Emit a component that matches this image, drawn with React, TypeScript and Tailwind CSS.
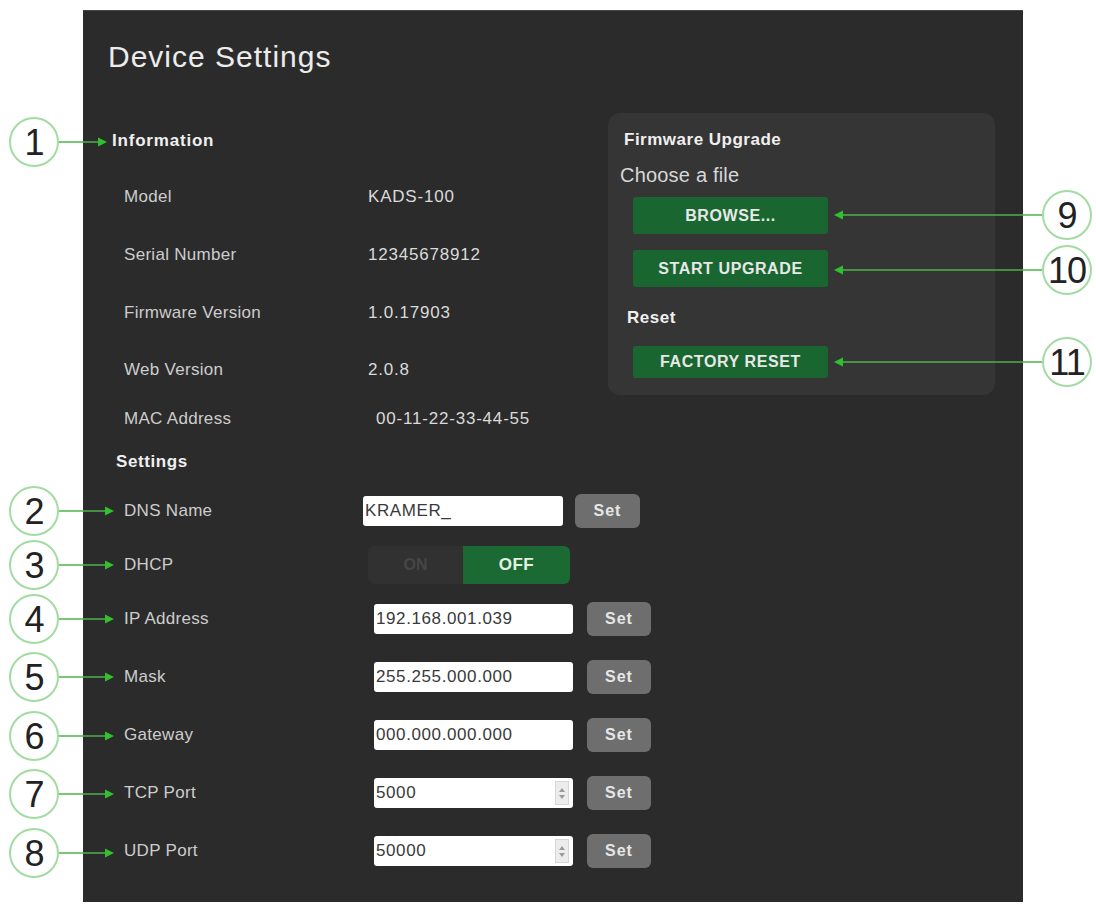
import React from 'react';

// callout annotations drawn over the screenshot (circle centre y, arrow tip x)
const LEFT_CALLOUTS = [
  { n: '1', y: 142, tip: 107 },
  { n: '2', y: 511, tip: 114 },
  { n: '3', y: 565, tip: 114 },
  { n: '4', y: 619, tip: 114 },
  { n: '5', y: 677, tip: 114 },
  { n: '6', y: 736, tip: 114 },
  { n: '7', y: 794, tip: 114 },
  { n: '8', y: 853, tip: 114 },
];

const RIGHT_CALLOUTS = [
  { n: '9', y: 215, tip: 834 },
  { n: '10', y: 270, tip: 834 },
  { n: '11', y: 362, tip: 834 },
];

const INFO = [
  { label: 'Model', value: 'KADS-100', mt: 'mt-[26px]', vcls: '' },
  { label: 'Serial Number', value: '12345678912', mt: 'mt-[28px]', vcls: '' },
  { label: 'Firmware Version', value: '1.0.17903', mt: 'mt-[28px]', vcls: '' },
  { label: 'Web Version', value: '2.0.8', mt: 'mt-[27px]', vcls: '' },
  { label: 'MAC Address', value: '00-11-22-33-44-55', mt: 'mt-[19px]', vcls: 'ml-[8px]' },
];

const NET = [
  { label: 'IP Address', value: '192.168.001.039', mt: 'mt-[24px]', spin: false },
  { label: 'Mask', value: '255.255.000.000', mt: 'mt-[28px]', spin: false },
  { label: 'Gateway', value: '000.000.000.000', mt: 'mt-[28px]', spin: false },
  { label: 'TCP Port', value: '5000', mt: 'mt-[28px]', spin: true },
  { label: 'UDP Port', value: '50000', mt: 'mt-[28px]', spin: true },
];

function Callouts() {
  return (
    <>
      <svg className="absolute inset-0 pointer-events-none" width={1096} height={910}>
        {LEFT_CALLOUTS.map((c) => (
          <g key={c.n}>
            <line x1={59} y1={c.y} x2={c.tip - 6} y2={c.y} stroke="#4cb34c" strokeWidth={1.5} />
            <polygon points={`${c.tip},${c.y} ${c.tip - 9},${c.y - 4.5} ${c.tip - 9},${c.y + 4.5}`} fill="#2fc22f" />
            <circle cx={34} cy={c.y} r={24} fill="#ffffff" stroke="#a2dca2" strokeWidth={2} />
          </g>
        ))}
        {RIGHT_CALLOUTS.map((c) => (
          <g key={c.n}>
            <line x1={c.tip + 6} y1={c.y} x2={1043} y2={c.y} stroke="#4cb34c" strokeWidth={1.5} />
            <polygon points={`${c.tip},${c.y} ${c.tip + 9},${c.y - 4.5} ${c.tip + 9},${c.y + 4.5}`} fill="#2fc22f" />
            <circle cx={1067} cy={c.y} r={24} fill="#ffffff" stroke="#a2dca2" strokeWidth={2} />
          </g>
        ))}
      </svg>
      {[...LEFT_CALLOUTS.map((c) => ({ ...c, x: 34 })), ...RIGHT_CALLOUTS.map((c) => ({ ...c, x: 1067 }))].map((c) => (
        <div
          key={c.n}
          className="absolute w-[50px] h-[50px] flex items-center justify-center text-[36px] leading-none tracking-[-1px] text-[#222222]"
          style={{ left: c.x - 25, top: c.y - 24 }}
        >
          {c.n}
        </div>
      ))}
    </>
  );
}

function SetButton({ w }: { w: string }) {
  return (
    <button className={`${w} h-[34px] shrink-0 rounded-[6px] bg-[#6e6e6e] text-[#e6e6e6] text-[16px] font-bold tracking-[1px]`}>
      Set
    </button>
  );
}

function Spinner() {
  return (
    <div className="absolute right-[4px] top-[3px] bottom-[3px] w-[14px] bg-[#ececec] border border-[#d6d6d6] flex flex-col items-center justify-center gap-[3px]">
      <div className="w-0 h-0 border-l-[3px] border-r-[3px] border-b-[4px] border-l-transparent border-r-transparent border-b-[#9a9a9a]" />
      <div className="w-0 h-0 border-l-[3px] border-r-[3px] border-t-[4px] border-l-transparent border-r-transparent border-t-[#9a9a9a]" />
    </div>
  );
}

function FirmwarePanel() {
  const btn =
    'ml-[25px] w-[195px] rounded-[3px] bg-[#1a6630] text-[#e8e8e8] text-[16px] font-bold tracking-[0.6px] flex items-center justify-center';
  return (
    <div className="mt-[39px] w-[387px] h-[282px] shrink-0 rounded-[12px] bg-[#353535] flex flex-col">
      <div className="ml-[16px] mt-[16px] h-[22px] leading-[22px] text-[17px] font-bold tracking-[0.5px] text-[#efefef]">
        Firmware Upgrade
      </div>
      <div className="ml-[12px] mt-[12px] h-[24px] leading-[24px] text-[20px] tracking-[0.2px] text-[#d8d8d8]">
        Choose a file
      </div>
      <button className={`${btn} mt-[10px] h-[37px]`}>BROWSE...</button>
      <button className={`${btn} mt-[16px] h-[37px]`}>START UPGRADE</button>
      <div className="ml-[19px] mt-[20px] h-[22px] leading-[22px] text-[17px] font-bold tracking-[0.5px] text-[#efefef]">
        Reset
      </div>
      <button className={`${btn} mt-[17px] h-[32px]`}>FACTORY RESET</button>
    </div>
  );
}

export default function App() {
  const label = 'shrink-0 text-[17px] tracking-[0.3px] text-[#cdcdcd]';
  const input =
    'h-[30px] shrink-0 rounded-[3px] bg-white pl-[2px] text-[17px] tracking-[0.6px] text-[#3a3a3a] outline-none';
  return (
    <div className="relative w-[1096px] h-[910px] bg-white overflow-hidden font-['Liberation_Sans',Arial,sans-serif]">
      <div className="pt-[10px] pl-[83px]">
        <div className="w-[940px] h-[892px] bg-[#2b2b2b] border-t border-[#444444] flex flex-col">
          <h1 className="ml-[25px] mt-[29px] h-[34px] leading-[34px] text-[30px] tracking-[1px] text-[#ececec]">
            Device Settings
          </h1>
          <div className="flex">
            <div className="w-[525px] shrink-0 flex flex-col">
              <div className="ml-[29px] mt-[52px] h-[30px] flex items-center text-[17px] font-bold tracking-[0.8px] text-[#f0f0f0]">
                Information
              </div>
              {INFO.map((r) => (
                <div key={r.label} className={`ml-[41px] ${r.mt} h-[30px] flex items-center`}>
                  <span className={`w-[244px] ${label}`}>{r.label}</span>
                  <span className={`${r.vcls} shrink-0 text-[17px] tracking-[0.8px] text-[#dadada]`}>{r.value}</span>
                </div>
              ))}
              <div className="ml-[33px] mt-[13px] h-[30px] flex items-center text-[17px] font-bold tracking-[0.6px] text-[#f0f0f0]">
                Settings
              </div>

              <div className="ml-[41px] mt-[19px] h-[30px] flex items-center">
                <span className={`w-[239px] ${label}`}>DNS Name</span>
                <input readOnly defaultValue="KRAMER_" className={`${input} w-[200px] h-[28px]`} />
                <div className="ml-[12px] shrink-0">
                  <SetButton w="w-[65px]" />
                </div>
              </div>

              <div className="ml-[41px] mt-[24px] h-[30px] flex items-center">
                <span className={`w-[244px] ${label}`}>DHCP</span>
                <div className="flex shrink-0 w-[202px] h-[38px] rounded-[6px] overflow-hidden">
                  <div className="w-[95px] bg-[#313131] flex items-center justify-center text-[16px] font-bold text-[#464646]">
                    ON
                  </div>
                  <div className="flex-1 bg-[#1b6a33] flex items-center justify-center text-[17px] font-bold tracking-[0.5px] text-[#e4f1e4]">
                    OFF
                  </div>
                </div>
              </div>

              {NET.map((r) => (
                <div key={r.label} className={`ml-[41px] ${r.mt} h-[30px] flex items-center`}>
                  <span className={`w-[250px] ${label}`}>{r.label}</span>
                  <div className="relative shrink-0">
                    <input readOnly defaultValue={r.value} className={`${input} w-[199px]`} />
                    {r.spin && <Spinner />}
                  </div>
                  <div className="ml-[14px] shrink-0">
                    <SetButton w="w-[64px]" />
                  </div>
                </div>
              ))}
            </div>
            <FirmwarePanel />
          </div>
        </div>
      </div>
      <Callouts />
    </div>
  );
}
